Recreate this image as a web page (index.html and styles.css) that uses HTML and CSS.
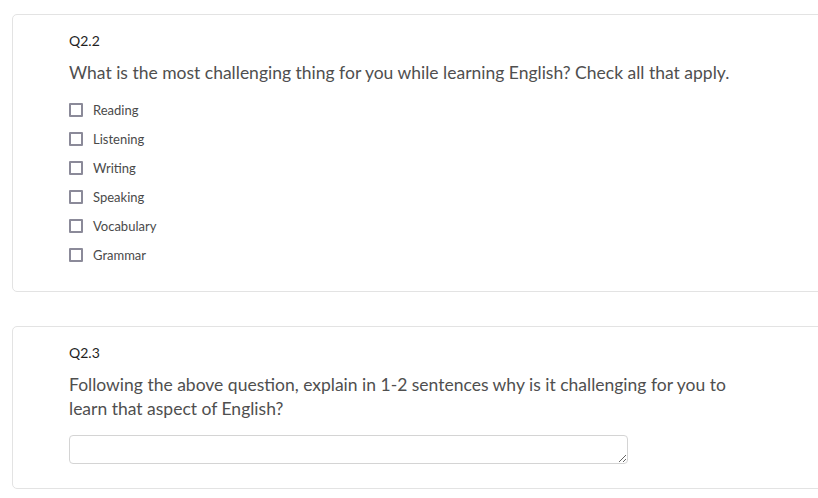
FILE: index.html
```html
<!doctype html>
<html>
  <head>
    <meta charset='utf-8'>
    <title>Survey</title>
    <link rel="stylesheet" href="styles.css">
  </head>
  <body>

    <div class="question">
      <div class="qnum">Q2.2</div>
      <div class="qtext">What is the most challenging thing for you while learning English? Check all that apply.</div>
      <ul class="choices">
        <li><span class="box"></span>Reading</li>
        <li><span class="box"></span>Listening</li>
        <li><span class="box"></span>Writing</li>
        <li><span class="box"></span>Speaking</li>
        <li><span class="box"></span>Vocabulary</li>
        <li><span class="box"></span>Grammar</li>
      </ul>
    </div>

    <div class="question second">
      <div class="qnum">Q2.3</div>
      <div class="qtext">Following the above question, explain in 1-2 sentences why is it challenging for you to learn that aspect of English?</div>
      <textarea class="answer"></textarea>
    </div>

  </body>
</html>
```

FILE: styles.css
```css
html, body {
  overflow: hidden;
}

body {
  margin: 0;
  padding: 14px 0 0 12px;
  font-family: Lato, sans-serif;
  background: #fff;
}

.question {
  width: 830px;
  box-sizing: border-box;
  border: 1px solid #e3e3e3;
  border-radius: 5px;
  padding: 17px 0 0 56px;
  height: 278px;
}
.question.second {
  margin-top: 34px;
  height: 163px;
}

.qnum {
  font-size: 14px;
  color: #1f1f1f;
  line-height: 18px;
}

.qtext {
  margin-top: 11px;
  font-size: 17.5px;
  line-height: 24px;
  color: #4f4f4f;
  width: 680px;
}

.choices {
  list-style: none;
  margin: 10px 0 0;
  padding: 0;
}
.choices li {
  display: flex;
  align-items: center;
  height: 29px;
  font-size: 13px;
  color: #4a4a4a;
}
.box {
  width: 10px;
  height: 10px;
  border: 2px solid #8b8a99;
  border-radius: 1px;
  margin-right: 10px;
}

.answer {
  display: block;
  margin-top: 14px;
  width: 559px;
  height: 29px;
  box-sizing: border-box;
  border: 1px solid #d4d4d4;
  border-radius: 4px;
  resize: vertical;
}
```
